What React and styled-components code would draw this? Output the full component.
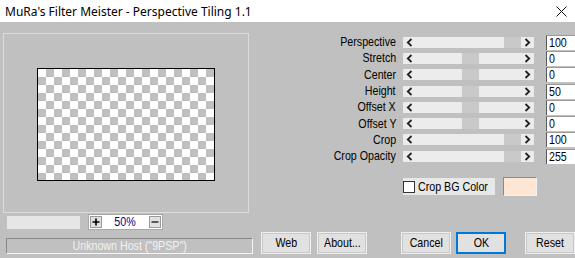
import React from "react";
import styled, { createGlobalStyle } from "styled-components";

const GlobalStyle = createGlobalStyle`
  html, body { margin: 0; padding: 0; background: #c0c0c0; overflow: hidden; }
  * { box-sizing: border-box; }
`;

const UI_FONT = `"Liberation Sans", Arial, sans-serif`;

const Window = styled.div`
  width: 575px;
  height: 258px;
  background: #c0c0c0;
  display: flex;
  flex-direction: column;
  overflow: hidden;
  font-family: ${UI_FONT};
  font-size: 13px;
  color: #000;
`;

/* narrow system-style text: the dialog uses a condensed face */
const Narrow = styled.span`
  display: inline-block;
  white-space: nowrap;
  transform: scaleX(0.82);
  transform-origin: ${(p) => p.$origin || "center"};
`;

const TitleBar = styled.div`
  height: 22px;
  flex: none;
  background: #fff;
  display: flex;
  align-items: center;
  justify-content: space-between;
  padding: 0 8px 0 5px;
  font-family: "Noto Sans", "Open Sans", sans-serif;
  font-size: 12px;
  color: #000;
`;

const Main = styled.div`
  display: flex;
  height: 210px;
  flex: none;
`;

const LeftCol = styled.div`
  width: 254px;
  flex: none;
  padding: 11px 0 0 3px;
  display: flex;
  flex-direction: column;
`;

const PreviewPanel = styled.div`
  width: 246px;
  height: 180px;
  border: 1px solid #dcdcdc;
  display: flex;
  align-items: center;
  justify-content: center;
`;

const Checker = styled.div`
  width: 178px;
  height: 113px;
  border: 1px solid #000;
  background-color: #fff;
  background-image: conic-gradient(#c0c0c0 0 25%, #fff 0 50%, #c0c0c0 0 75%, #fff 0);
  background-size: 16px 16px;
  background-position: 0 0;
  margin-top: 2px;
`;

const ZoomRow = styled.div`
  display: flex;
  align-items: center;
  height: 16px;
  margin-top: 1px;
  padding-left: 4px;
  gap: 8px;
`;

const BlankField = styled.div`
  width: 73px;
  height: 13px;
  background: #e6e6e6;
`;

const ZoomBox = styled.div`
  width: 75px;
  height: 16px;
  background: #fff;
  border: 1px solid #a8a8a8;
  display: flex;
  align-items: center;
  justify-content: space-between;
  padding: 0 1px;
`;

const TinyButton = styled.div`
  width: 12px;
  height: 12px;
  background: #e1e1e1;
  border: 1px solid #9a9a9a;
  display: flex;
  align-items: center;
  justify-content: center;
`;

const ZoomValue = styled(Narrow)`
  color: #000080;
  line-height: 14px;
`;

const RightCol = styled.div`
  flex: 1;
  padding-top: 12px;
  display: flex;
  flex-direction: column;
`;

const SliderGrid = styled.div`
  display: grid;
  grid-template-columns: 142px 131px 35px;
  column-gap: 7px;
  grid-auto-rows: 16.3px;
  align-items: center;
  & > *:nth-child(3n) { margin-left: 5px; }
`;

const Label = styled.div`
  text-align: right;
  line-height: 14px;
  white-space: nowrap;
`;

const Track = styled.div`
  position: relative;
  height: 11px;
  background: #ececec;
  display: flex;
  align-items: center;
  justify-content: space-between;
  padding: 0 3px 0 3px;
`;

const Thumb = styled.div`
  position: absolute;
  top: 0;
  width: 17px;
  height: 11px;
  background: #c9c9c9;
`;

const Arrow = styled.svg`
  width: 7px;
  height: 9px;
  position: relative;
  z-index: 1;
`;

const ValueBox = styled.div`
  height: 15px;
  background: #fff;
  border-left: 1px solid #5a5a5a;
  border-top: 1px solid #9a9a9a;
  padding-left: 2px;
  line-height: 13px;
  white-space: nowrap;
`;

const CheckRow = styled.div`
  display: flex;
  align-items: center;
  margin-top: 13px;
  padding-left: 149px;
  gap: 8px;
`;

const CheckLabel = styled.label`
  width: 92px;
  height: 17px;
  background: #e8e8e8;
  display: flex;
  align-items: center;
  gap: 3px;
  line-height: 14px;
`;

const CheckBox = styled.span`
  width: 12px;
  height: 12px;
  background: #fff;
  border: 1px solid #333;
  flex: none;
`;

const Swatch = styled.div`
  width: 34px;
  height: 19px;
  background: #fde6d4;
  border-top: 1px solid #8a8a8a;
  border-left: 1px solid #8a8a8a;
  border-right: 1px solid #f2f2f2;
  border-bottom: 1px solid #f2f2f2;
`;

const BottomBar = styled.div`
  display: flex;
  align-items: flex-start;
  height: 26px;
`;

const StatusBox = styled.div`
  width: 248px;
  height: 16px;
  margin: 6px 8px 0 6px;
  border-top: 1px solid #8a8a8a;
  border-left: 1px solid #8a8a8a;
  border-bottom: 1px solid #f4f4f4;
  border-right: 1px solid #f4f4f4;
  color: #f2f2f2;
  display: flex;
  justify-content: center;
  line-height: 14px;
`;

const Button = styled.div`
  width: 50px;
  height: 22px;
  margin-left: ${(p) => p.$gap || 0}px;
  background: #e1e1e1;
  border: ${(p) => (p.$default ? "2px solid #0078d7" : "1px solid #f0f0f0")};
  box-shadow: ${(p) => (p.$default ? "none" : "inset 0 0 0 1px #c8c8c8")};
  display: flex;
  align-items: center;
  justify-content: center;
  line-height: 14px;
`;

const sliders = [
  { label: "Perspective", value: 100, min: 0, max: 100 },
  { label: "Stretch", value: 0, min: -100, max: 100 },
  { label: "Center", value: 0, min: -100, max: 100 },
  { label: "Height", value: 50, min: 0, max: 100 },
  { label: "Offset X", value: 0, min: -100, max: 100 },
  { label: "Offset Y", value: 0, min: -100, max: 100 },
  { label: "Crop", value: 100, min: 0, max: 100 },
  { label: "Crop Opacity", value: 255, min: 0, max: 255 },
];

const LeftArrow = () => (
  <Arrow viewBox="0 0 7 9">
    <path d="M5.5 1 L1.8 4.5 L5.5 8" fill="none" stroke="#222" strokeWidth="1.8" />
  </Arrow>
);
const RightArrow = () => (
  <Arrow viewBox="0 0 7 9">
    <path d="M1.5 1 L5.2 4.5 L1.5 8" fill="none" stroke="#222" strokeWidth="1.8" />
  </Arrow>
);

function Slider({ value, min, max }) {
  const frac = (value - min) / (max - min);
  const left = 16 + frac * 85;
  return (
    <Track>
      <LeftArrow />
      <Thumb style={{ left: `${left}px` }} />
      <RightArrow />
    </Track>
  );
}

export default function App() {
  return (
    <>
      <GlobalStyle />
      <Window>
        <TitleBar>
          <span>MuRa's Filter Meister - Perspective Tiling 1.1</span>
          <svg width="11" height="11" viewBox="0 0 11 11">
            <path d="M0.5 0.5 L10.5 10.5 M10.5 0.5 L0.5 10.5" stroke="#111" strokeWidth="1" />
          </svg>
        </TitleBar>
        <Main>
          <LeftCol>
            <PreviewPanel>
              <Checker />
            </PreviewPanel>
            <ZoomRow>
              <BlankField />
              <ZoomBox>
                <TinyButton>
                  <svg width="8" height="8" viewBox="0 0 8 8">
                    <path d="M4 0.5 V7.5 M0.5 4 H7.5" stroke="#000" strokeWidth="1.6" />
                  </svg>
                </TinyButton>
                <ZoomValue>50%</ZoomValue>
                <TinyButton>
                  <svg width="8" height="8" viewBox="0 0 8 8">
                    <path d="M0.5 4 H7.5" stroke="#000" strokeWidth="1.2" />
                  </svg>
                </TinyButton>
              </ZoomBox>
            </ZoomRow>
          </LeftCol>
          <RightCol>
            <SliderGrid>
              {sliders.map((s) => (
                <React.Fragment key={s.label}>
                  <Label>
                    <Narrow $origin="right">{s.label}</Narrow>
                  </Label>
                  <Slider value={s.value} min={s.min} max={s.max} />
                  <ValueBox>
                    <Narrow $origin="left">{s.value}</Narrow>
                  </ValueBox>
                </React.Fragment>
              ))}
            </SliderGrid>
            <CheckRow>
              <CheckLabel>
                <CheckBox />
                <Narrow $origin="left">Crop BG Color</Narrow>
              </CheckLabel>
              <Swatch />
            </CheckRow>
          </RightCol>
        </Main>
        <BottomBar>
          <StatusBox>
            <Narrow>Unknown Host ("9PSP")</Narrow>
          </StatusBox>
          <Button><Narrow>Web</Narrow></Button>
          <Button $gap={6}><Narrow>About...</Narrow></Button>
          <Button $gap={34}><Narrow>Cancel</Narrow></Button>
          <Button $gap={5} $default><Narrow>OK</Narrow></Button>
          <Button $gap={19}><Narrow>Reset</Narrow></Button>
        </BottomBar>
      </Window>
    </>
  );
}
